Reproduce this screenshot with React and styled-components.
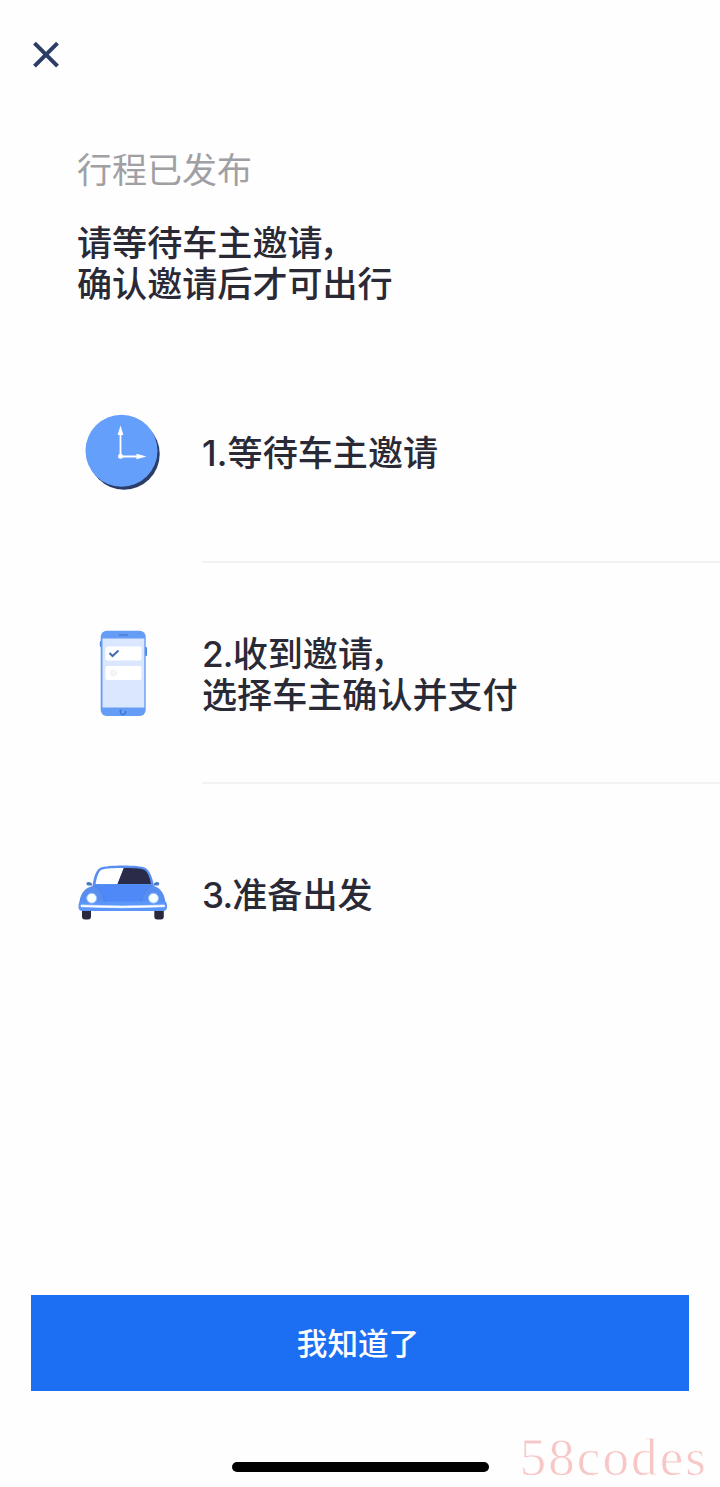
import React from 'react';
import styled, { createGlobalStyle } from 'styled-components';

const GlobalStyle = createGlobalStyle`
  * { box-sizing: border-box; }
  body { margin: 0; background: #fefefe; }
`;

const Screen = styled.main`
  position: relative;
  display: flex;
  flex-direction: column;
  width: 720px;
  height: 1487px;
  overflow: hidden;
  background: #fefefe;
  color: #2a2a37;
  font-family: Inter, 'Noto Sans CJK SC', sans-serif;
`;

const CloseButton = styled.button`
  width: 28px;
  height: 28px;
  margin: 41px 0 0 32px;
  padding: 0;
  border: 0;
  background: none;
  svg { display: block; }
`;

const Header = styled.header`
  height: 273px;
  padding: 81px 77px 0;
`;

const Status = styled.p`
  margin: 0 0 32px;
  font-size: 35px;
  line-height: 41px;
  font-weight: 400;
  color: #a0a0a4;
`;

const Title = styled.h1`
  margin: 0;
  font-size: 35.1px;
  line-height: 41px;
  font-weight: 500;
`;

const Comma = styled.span`
  margin-left: -3px;
`;

const Steps = styled.ol`
  margin: 0;
  padding: 0;
  list-style: none;
`;

const Step = styled.li`
  display: flex;
  height: 221px;
`;

const Figure = styled.div`
  display: flex;
  align-items: center;
  justify-content: center;
  width: 125px;
  margin-left: 60px;
  padding-bottom: ${(p) => p.$lift}px;
  svg { display: block; overflow: visible; }
`;

const StepText = styled.div`
  flex: 1;
  display: flex;
  align-items: center;
  margin-left: 17px;
  padding-top: 4px;
  font-size: 35.1px;
  line-height: 41px;
  font-weight: 500;
  border-bottom: 2px solid ${(p) => (p.$last ? 'transparent' : '#f2f2f3')};
`;

const StepNumber = styled.span`
  letter-spacing: ${(p) => p.$tracking}px;
`;

const Footer = styled.footer`
  margin-top: auto;
  padding: 0 31px 15px;
  display: flex;
  flex-direction: column;
  align-items: center;
`;

const ConfirmButton = styled.button`
  width: 658px;
  height: 96px;
  padding: 0 4px 2px 0;
  border: 0;
  background: #1c6ef3;
  color: #fff;
  font: 500 30.6px/94px 'Noto Sans CJK SC', sans-serif;
`;

const HomeIndicator = styled.div`
  width: 257px;
  height: 10px;
  margin-top: 71px;
  border-radius: 5px;
  background: #000;
`;

const Watermark = styled.span`
  position: absolute;
  right: 12px;
  bottom: 1px;
  font: 400 53px/58px 'Liberation Serif', serif;
  letter-spacing: 2.1px;
  color: #f7c6c6;
  -webkit-text-stroke: 0.8px #fefefe;
`;

const CloseIcon = () => (
  <svg width="28" height="28" viewBox="0 0 28 28" fill="none" stroke="#2c3d66" strokeWidth="4">
    <path d="M2.5 2.2 25.5 25.2M25.5 2.2 2.5 25.2" />
  </svg>
);

const ClockIcon = () => (
  <svg width="76" height="76" viewBox="85 414 76 76">
    <circle cx="124" cy="454" r="35.7" fill="#2b3c68" />
    <circle cx="121.5" cy="450.8" r="36" fill="#649ffb" />
    <path d="M120.5 456V432M120.5 456.5H138" stroke="#fff" strokeWidth="1.8" fill="none" />
    <circle cx="120.5" cy="456.3" r="2.5" fill="#fff" />
    <path d="M120.5 425.5 123.4 435H117.6ZM146.5 456.5 136.5 453.7V459.3Z" fill="#fff" />
  </svg>
);

const PhoneIcon = () => (
  <svg width="48" height="86" viewBox="99 630 48 86">
    <rect x="99.8" y="641" width="3" height="6" rx="1" fill="#4c84dc" />
    <rect x="144" y="647" width="3" height="9" rx="1" fill="#4c84dc" />
    <rect x="100.7" y="630.7" width="45" height="85.3" rx="6" fill="#659cf5" />
    <path d="M102.5 638.5H144.3V707.5H102.5Z" fill="#dbe7fe" />
    <path d="M119 635H128" stroke="#487cca" strokeWidth="1.4" />
    <rect x="105.5" y="646.5" width="36" height="14" rx="2" fill="#fff" />
    <rect x="105.5" y="666" width="36" height="14" rx="2" fill="#fff" />
    <path d="M109.5 653 112.5 656 118.5 650.5" fill="none" stroke="#416daf" strokeWidth="2" />
    <circle cx="113.5" cy="673" r="3" fill="#f6f6f7" stroke="#eeeeef" />
    <path d="M121.2 709.7A2.7 2.7 0 1 0 125.5 711" fill="none" stroke="#3b72ca" strokeWidth="1.2" />
  </svg>
);

const CarIcon = () => (
  <svg width="89" height="56" viewBox="78 864 89 56">
    <rect x="82" y="906" width="9" height="13.5" rx="3" fill="#29283f" />
    <rect x="154.3" y="906" width="9.5" height="13.5" rx="3" fill="#29283f" />
    <path d="M92.5 886C94 876 96 870.5 100 868C108 864.8 138 864.8 145.5 868C149.5 870.5 152.5 877 154 886C160 888 164.5 893 165.3 902H79.5C80.5 893 85 888 92.5 886Z" fill="#588ef0" />
    <path d="M95.5 884C97 876.5 98.5 871.5 101.5 869.8C106 868.2 115 868 123.8 868L117.5 884Z" fill="#fff" />
    <path d="M123.8 868C132 868 140 868.2 144.2 869.8C147.5 871.8 149.7 877 151 884H117.5Z" fill="#292b49" />
    <path d="M94.5 885C101 890 104 897 104.5 904H141.5C142 897 145 890 152 885Z" fill="#4e89f7" />
    <path d="M94 885C101 890 104.5 897 105 904M152 885C145 890 141.5 897 141 904" stroke="#437fd9" strokeOpacity="0.5" fill="none" />
    <path d="M86.5 882.5Q90 881 92 883.5V885.5H88Q86 885 86.5 882.5ZM159 882.5Q155.5 881 154 883.5V885.5H157.5Q159.8 885 159 882.5Z" fill="#4779c6" />
    <path d="M79.5 901.5H165.8Q167 903 167 907Q167 911 163 911H82.5Q78.5 911 78.5 907Q78.5 903 79.5 901.5Z" fill="#5b96fa" />
    <circle cx="91.7" cy="898.2" r="5" fill="#f7ffff" stroke="#92bdfb" />
    <circle cx="153.5" cy="898.2" r="5" fill="#f7ffff" stroke="#92bdfb" />
    <path d="M81 905Q122.5 907 164.5 905V906.8Q122.5 908.8 81 906.8Z" fill="#fff" stroke="#fff" strokeWidth="0.6" />
  </svg>
);

const steps = [
  { number: '1.', tracking: 0.2, lines: ['等待车主邀请'], Icon: ClockIcon, lift: 2 },
  { number: '2.', tracking: -0.8, lines: ['收到邀请，', '选择车主确认并支付'], Icon: PhoneIcon, lift: 2 },
  { number: '3.', tracking: -0.8, lines: ['准备出发'], Icon: CarIcon, lift: 6, last: true },
];

const withComma = (line) =>
  line.endsWith('，') ? <>{line.slice(0, -1)}<Comma>，</Comma></> : line;

export default function App() {
  return (
    <Screen lang="zh-CN">
      <GlobalStyle />
      <CloseButton aria-label="关闭"><CloseIcon /></CloseButton>
      <Header>
        <Status>行程已发布</Status>
        <Title>{withComma('请等待车主邀请，')}<br />确认邀请后才可出行</Title>
      </Header>
      <Steps>
        {steps.map(({ number, tracking, lines, Icon, lift, last }) => (
          <Step key={number}>
            <Figure $lift={lift}><Icon /></Figure>
            <StepText $last={last}>
              <div>
                <StepNumber $tracking={tracking}>{number}</StepNumber>
                {withComma(lines[0])}
                {lines[1] && <><br />{lines[1]}</>}
              </div>
            </StepText>
          </Step>
        ))}
      </Steps>
      <Footer>
        <ConfirmButton>我知道了</ConfirmButton>
        <HomeIndicator />
      </Footer>
      <Watermark>58codes</Watermark>
    </Screen>
  );
}
